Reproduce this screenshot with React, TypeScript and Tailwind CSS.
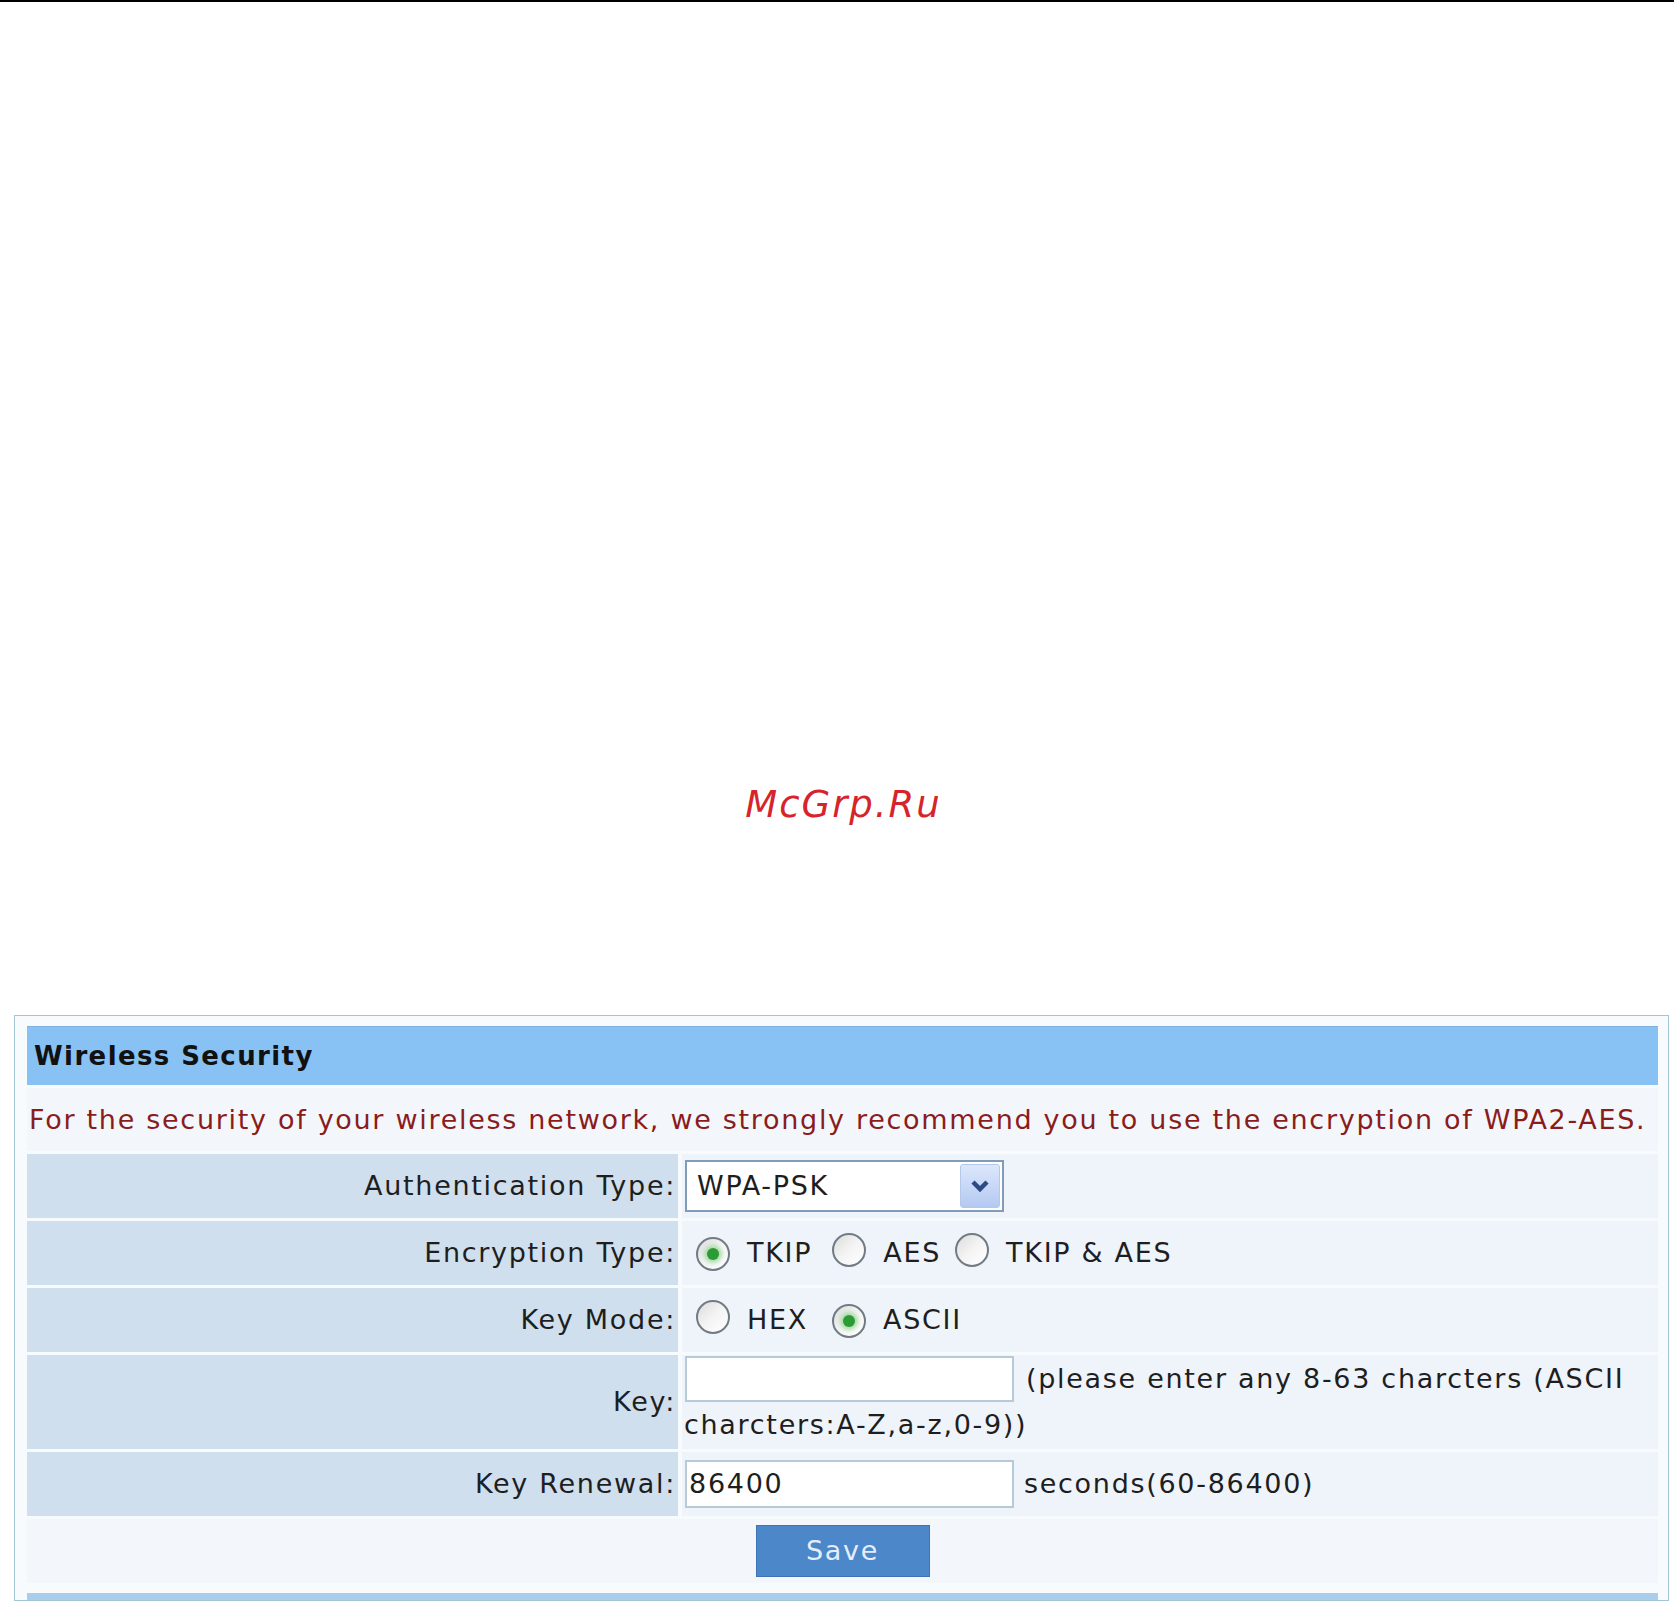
import React from 'react'

const font = { fontFamily: '"DejaVu Sans", Verdana, sans-serif' }

function Radio({ checked }: { checked?: boolean }) {
  return (
    <span className="inline-flex h-[34px] w-[34px] shrink-0 items-center justify-center rounded-full border-2 border-[#717b84] bg-linear-to-br from-[#dcdcdc] via-[#f4f4f4] to-white">
      {checked && (
        <span className="h-[12px] w-[12px] rounded-full bg-[#2c9a35] shadow-[0_0_4px_3px_#a6dca6]" />
      )}
    </span>
  )
}

function Row({
  label,
  children,
  tall,
}: {
  label: string
  children: React.ReactNode
  tall?: boolean
}) {
  return (
    <div className={`grid grid-cols-[651px_1fr] gap-[4px] ${tall ? 'h-[94px]' : 'h-[64px]'}`}>
      <div className="flex items-center justify-end bg-[#cfdfed] pr-[2px] text-[#1e1e1e]">{label}</div>
      <div className="flex items-center bg-[#eef4fa] pl-[3px] text-[#1e1e1e]">{children}</div>
    </div>
  )
}

export default function App() {
  return (
    <div className="min-h-[1604px] w-full bg-white" style={font}>
      <div className="h-[2px] w-full bg-black" />

      {/* watermark */}
      <div className="pt-[784px] pl-[13px] text-center">
        <span className="text-[37px] leading-[37px] tracking-[2px] text-[#d6242b] italic">McGrp.Ru</span>
      </div>

      {/* panel */}
      <div className="mt-[191px] mr-[5px] ml-[14px] border border-[#a3c6d6] bg-[#f7fbfe] pt-[10px] pr-[10px] pl-[12px]">
        <div className="flex flex-col gap-[3px] text-[27px] leading-[30px] tracking-[1.7px]">
          <div className="flex h-[59px] items-center border-t border-[#7fb1de] bg-[#88c2f4] pl-[7px] text-[26px] font-bold tracking-[1.4px] text-[#111]">
            Wireless Security
          </div>

          <div className="flex h-[63px] items-center bg-[#f3f7fb] pl-[2px] text-[#8a1c1c]">
            For the security of your wireless network, we strongly recommend you to use the encryption of WPA2-AES.
          </div>

          <Row label="Authentication Type:">
            <div className="flex h-[52px] w-[319px] items-center border-2 border-[#7f9db9] bg-white">
              <span className="flex-1 pl-[10px]">WPA-PSK</span>
              <span className="mr-[2px] flex h-[44px] w-[40px] items-center justify-center rounded-[3px] border border-[#b5c8ec] bg-linear-to-b from-[#dce7fb] to-[#b4c9f2]">
                <svg width="20" height="14" viewBox="0 0 20 14">
                  <path d="M3 3 L10 10 L17 3" fill="none" stroke="#2c4a86" strokeWidth="4.5" />
                </svg>
              </span>
            </div>
          </Row>

          <Row label="Encryption Type:">
            <span className="ml-[11px]"><Radio checked /></span>
            <span className="ml-[17px]">TKIP</span>
            <span className="ml-[20px]"><Radio /></span>
            <span className="ml-[17px]">AES</span>
            <span className="ml-[14px]"><Radio /></span>
            <span className="ml-[17px]">TKIP &amp; AES</span>
          </Row>

          <Row label="Key Mode:">
            <span className="ml-[11px]"><Radio /></span>
            <span className="ml-[17px]">HEX</span>
            <span className="ml-[24px]"><Radio checked /></span>
            <span className="ml-[17px]">ASCII</span>
          </Row>

          <Row label="Key:" tall>
            <div className="flex h-full flex-col justify-center">
              <div className="flex h-[46px] items-center">
                <div className="h-[46px] w-[329px] border-2 border-[#b7cad8] bg-white" />
                <span className="ml-[12px]">(please enter any 8-63 charcters (ASCII</span>
              </div>
              <div className="-ml-[1px] flex h-[46px] items-center">charcters:A-Z,a-z,0-9))</div>
            </div>
          </Row>

          <Row label="Key Renewal:">
            <div className="flex h-[48px] w-[329px] items-center border-2 border-[#b7cad8] bg-white pl-[2px]">86400</div>
            <span className="ml-[10px]">seconds(60-86400)</span>
          </Row>

          <div className="flex h-[64px] items-center justify-center bg-[#f3f7fb]">
            <div className="flex h-[52px] w-[174px] items-center justify-center border border-[#3f74b4] bg-[#4b87c9] text-[#e4eefa]">
              Save
            </div>
          </div>

          <div className="mt-[7px] h-[7px] bg-[#a9cdea]" />
        </div>
      </div>
    </div>
  )
}
